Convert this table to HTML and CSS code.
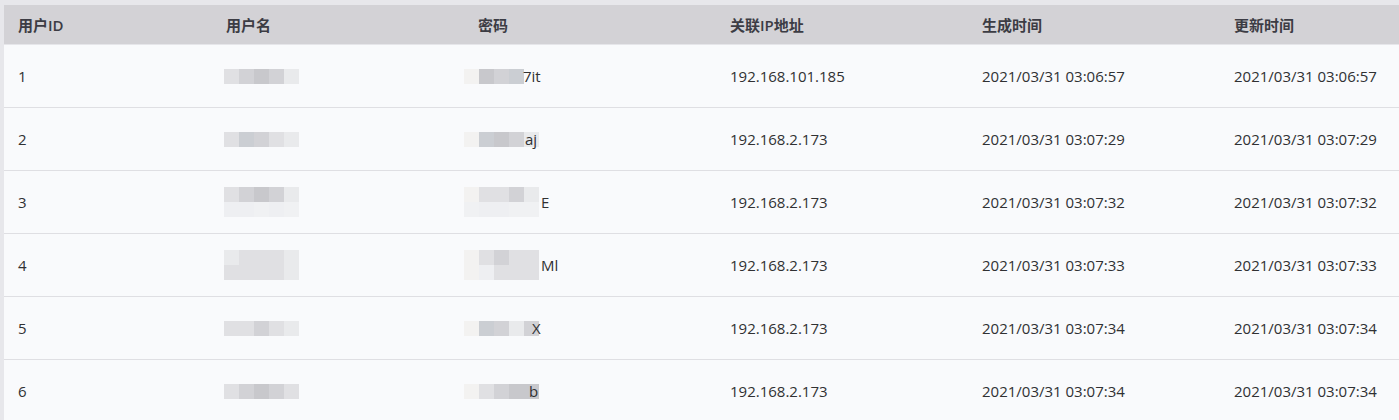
FILE: index.html
```html
<!DOCTYPE html>
<html lang="zh">
<head>
<meta charset="utf-8">
<link rel="stylesheet" href="styles.css">
</head>
<body>
<div class="page">
  <div class="table">
    <div class="row head">
      <div class="cell">用户ID</div>
      <div class="cell">用户名</div>
      <div class="cell">密码</div>
      <div class="cell">关联IP地址</div>
      <div class="cell">生成时间</div>
      <div class="cell">更新时间</div>
    </div>
    <div class="row">
      <div class="cell">1</div>
      <div class="cell"><span class="mosaic"><i class="a"></i><i class="b"></i><i class="c"></i><i class="b"></i><i class="e"></i></span></div>
      <div class="cell pw"><span class="mosaic s1"><i class="f"></i><i class="c"></i><i class="b"></i><i class="d"></i></span>7it</div>
      <div class="cell">192.168.101.185</div>
      <div class="cell">2021/03/31 03:06:57</div>
      <div class="cell">2021/03/31 03:06:57</div>
    </div>
    <div class="row">
      <div class="cell">2</div>
      <div class="cell"><span class="mosaic"><i class="a"></i><i class="d"></i><i class="b"></i><i class="a"></i><i class="e"></i></span></div>
      <div class="cell pw"><span class="mosaic s2"><i class="f"></i><i class="d"></i><i class="c"></i><i class="b"></i><i class="e"></i></span>aj</div>
      <div class="cell">192.168.2.173</div>
      <div class="cell">2021/03/31 03:07:29</div>
      <div class="cell">2021/03/31 03:07:29</div>
    </div>
    <div class="row">
      <div class="cell">3</div>
      <div class="cell"><span class="mosaic"><i class="a"></i><i class="b"></i><i class="c"></i><i class="b"></i><i class="e"></i><i class="g"></i><i class="g"></i><i class="h"></i><i class="g"></i><i class="h"></i></span></div>
      <div class="cell pw"><span class="mosaic s3"><i class="f"></i><i class="a"></i><i class="a"></i><i class="b"></i><i class="e"></i><i class="h"></i><i class="g"></i><i class="g"></i><i class="h"></i><i class="h"></i></span>E</div>
      <div class="cell">192.168.2.173</div>
      <div class="cell">2021/03/31 03:07:32</div>
      <div class="cell">2021/03/31 03:07:32</div>
    </div>
    <div class="row">
      <div class="cell">4</div>
      <div class="cell"><span class="mosaic"><i class="e"></i><i class="a"></i><i class="a"></i><i class="a"></i><i class="e"></i><i class="a"></i><i class="a"></i><i class="a"></i><i class="a"></i><i class="e"></i></span></div>
      <div class="cell pw"><span class="mosaic s4"><i class="f"></i><i class="a"></i><i class="b"></i><i class="a"></i><i class="a"></i><i class="f"></i><i class="g"></i><i class="a"></i><i class="a"></i><i class="a"></i></span>Ml</div>
      <div class="cell">192.168.2.173</div>
      <div class="cell">2021/03/31 03:07:33</div>
      <div class="cell">2021/03/31 03:07:33</div>
    </div>
    <div class="row">
      <div class="cell">5</div>
      <div class="cell"><span class="mosaic"><i class="a"></i><i class="a"></i><i class="b"></i><i class="a"></i><i class="e"></i></span></div>
      <div class="cell pw"><span class="mosaic s5"><i class="f"></i><i class="d"></i><i class="b"></i><i class="e"></i><i class="b"></i></span>X</div>
      <div class="cell">192.168.2.173</div>
      <div class="cell">2021/03/31 03:07:34</div>
      <div class="cell">2021/03/31 03:07:34</div>
    </div>
    <div class="row">
      <div class="cell">6</div>
      <div class="cell"><span class="mosaic"><i class="a"></i><i class="b"></i><i class="c"></i><i class="b"></i><i class="a"></i></span></div>
      <div class="cell pw"><span class="mosaic s6"><i class="f"></i><i class="a"></i><i class="b"></i><i class="c"></i><i class="c"></i></span>b</div>
      <div class="cell">192.168.2.173</div>
      <div class="cell">2021/03/31 03:07:34</div>
      <div class="cell">2021/03/31 03:07:34</div>
    </div>
  </div>
</div>
</body>
</html>
```
FILE: styles.css
```css
html, body {
  margin: 0;
  padding: 0;
  background: #e7e7eb;
  overflow: hidden;
}
.page {
  padding: 5px 0 0 4px;
  height: 415px;
  overflow: hidden;
}
.table {
  font-family: "Open Sans", "Noto Sans CJK SC", sans-serif;
  font-size: 15px;
  color: #303133;
  background: #f9fafc;
  width: 1472px;
}
.row {
  display: grid;
  grid-template-columns: 208px repeat(5, 252px);
  height: 62px;
  align-items: center;
  border-bottom: 1px solid #dfdfe3;
  background: #f9fafc;
}
.row.head {
  height: 39px;
  background: #d3d2d6;
  font-weight: 600;
  color: #3c3c44;
  border-bottom: 1px solid #e6e6ea;
}
.cell {
  padding-left: 14px;
  white-space: nowrap;
  display: flex;
  align-items: center;
  line-height: 20px;
}
.pw {
  padding-left: 0;
}
.mosaic {
  display: grid;
  grid-template-columns: repeat(5, 15px);
  grid-auto-rows: 15px;
  margin-left: -2px;
}
.pw .mosaic {
  margin-left: 0;
}
.pw .s1 { margin-right: -16px; }
.pw .s2 { margin-right: -14px; }
.pw .s3 { margin-right: 2px; }
.pw .s4 { margin-right: 2px; }
.pw .s5 { margin-right: -7px; }
.pw .s6 { margin-right: -10px; }
.mosaic i { display: block; }
.mosaic .a { background: #e0e0e3; }
.mosaic .b { background: #d2d2d6; }
.mosaic .c { background: #c8c8cc; }
.mosaic .d { background: #cbced3; }
.mosaic .e { background: #e9eaec; }
.mosaic .f { background: #f3f2f1; }
.mosaic .g { background: #eeeff2; }
.mosaic .h { background: #f0f1f3; }
```
